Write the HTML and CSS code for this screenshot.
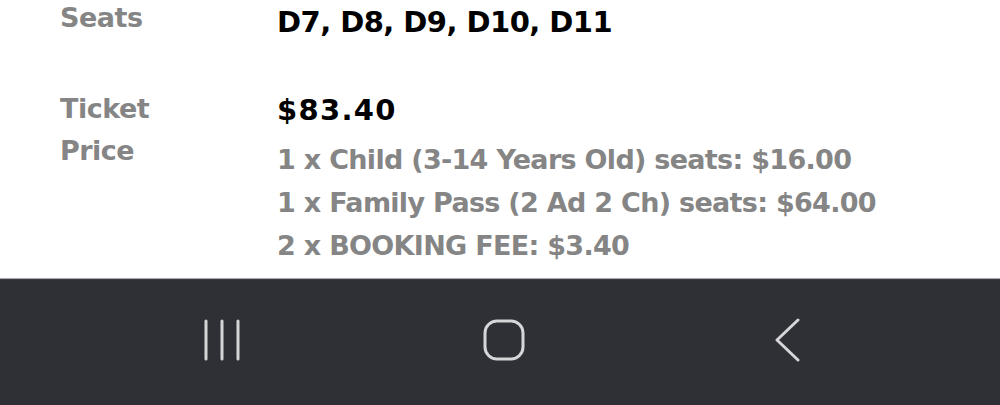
FILE: index.html
```html
<!DOCTYPE html>
<html>
<head>
<meta charset="utf-8">
<link rel="stylesheet" href="styles.css">
</head>
<body>
<div class="screen">
  <div class="content">
    <div class="row seats-row">
      <div class="label">Seats</div>
      <div class="value strong">D7, D8, D9, D10, D11</div>
    </div>
    <div class="row price-row">
      <div class="label">Ticket<br>Price</div>
      <div class="value">
        <div class="strong total">$83.40</div>
        <div class="details">
          <div class="detail">1 x Child (3-14 Years Old) seats: $16.00</div>
          <div class="detail">1 x Family Pass (2 Ad 2 Ch) seats: $64.00</div>
          <div class="detail">2 x BOOKING FEE: $3.40</div>
        </div>
      </div>
    </div>
  </div>
  <div class="navbar">
    <div class="nav-btn">
      <svg width="44" height="44" viewBox="0 0 44 44">
        <g stroke="#d6d6d8" stroke-width="3" stroke-linecap="round">
          <line x1="6" y1="3" x2="6" y2="41"/>
          <line x1="22" y1="3" x2="22" y2="41"/>
          <line x1="38" y1="3" x2="38" y2="41"/>
        </g>
      </svg>
    </div>
    <div class="nav-btn">
      <svg width="44" height="44" viewBox="0 0 44 44">
        <rect x="3" y="3" width="38" height="38" rx="12" ry="12" fill="none" stroke="#d6d6d8" stroke-width="3"/>
      </svg>
    </div>
    <div class="nav-btn">
      <svg width="44" height="44" viewBox="0 0 44 44">
        <polyline points="32,2 11,22 32,42" fill="none" stroke="#d6d6d8" stroke-width="3" stroke-linecap="round" stroke-linejoin="round"/>
      </svg>
    </div>
  </div>
</div>
</body>
</html>
```

FILE: styles.css
```css
html, body {
  margin: 0;
  padding: 0;
  background: #ffffff;
}
.screen {
  width: 1000px;
  height: 405px;
  display: flex;
  flex-direction: column;
  overflow: hidden;
  font-family: "DejaVu Sans", sans-serif;
  font-weight: 700;
}
.content {
  height: 278px;
  box-sizing: border-box;
  padding: 0 0 0 60px;
  background: #ffffff;
  display: flex;
  flex-direction: column;
}
.row {
  display: grid;
  grid-template-columns: 217px 1fr;
  align-items: start;
}
.seats-row {
  margin-top: -3px;
}
.seats-row .value {
  padding-top: 4px;
}
.price-row {
  margin-top: 45px;
}
.price-row .value {
  padding-top: 1px;
}
.label {
  color: #858585;
  font-size: 27px;
  line-height: 42px;
  letter-spacing: -0.5px;
}
.strong {
  color: #000000;
  font-size: 29px;
  line-height: 42px;
  letter-spacing: -0.55px;
}
.total {
  letter-spacing: 1.3px;
}
.details {
  margin-top: 7px;
}
.detail {
  color: #858585;
  font-size: 27px;
  line-height: 43px;
  letter-spacing: -0.7px;
  white-space: nowrap;
}
.navbar {
  flex: 1;
  background: #2f3035;
  border-top: 1px solid #a9aaae;
  box-shadow: inset 0 1px 0 #3c3d43;
  display: flex;
  align-items: center;
  padding-bottom: 4px;
}
.nav-btn {
  display: flex;
  justify-content: center;
  align-items: center;
}
.nav-btn:nth-child(1) { margin-left: 200px; }
.nav-btn:nth-child(2) { margin-left: 238px; }
.nav-btn:nth-child(3) { margin-left: 240px; }
```
